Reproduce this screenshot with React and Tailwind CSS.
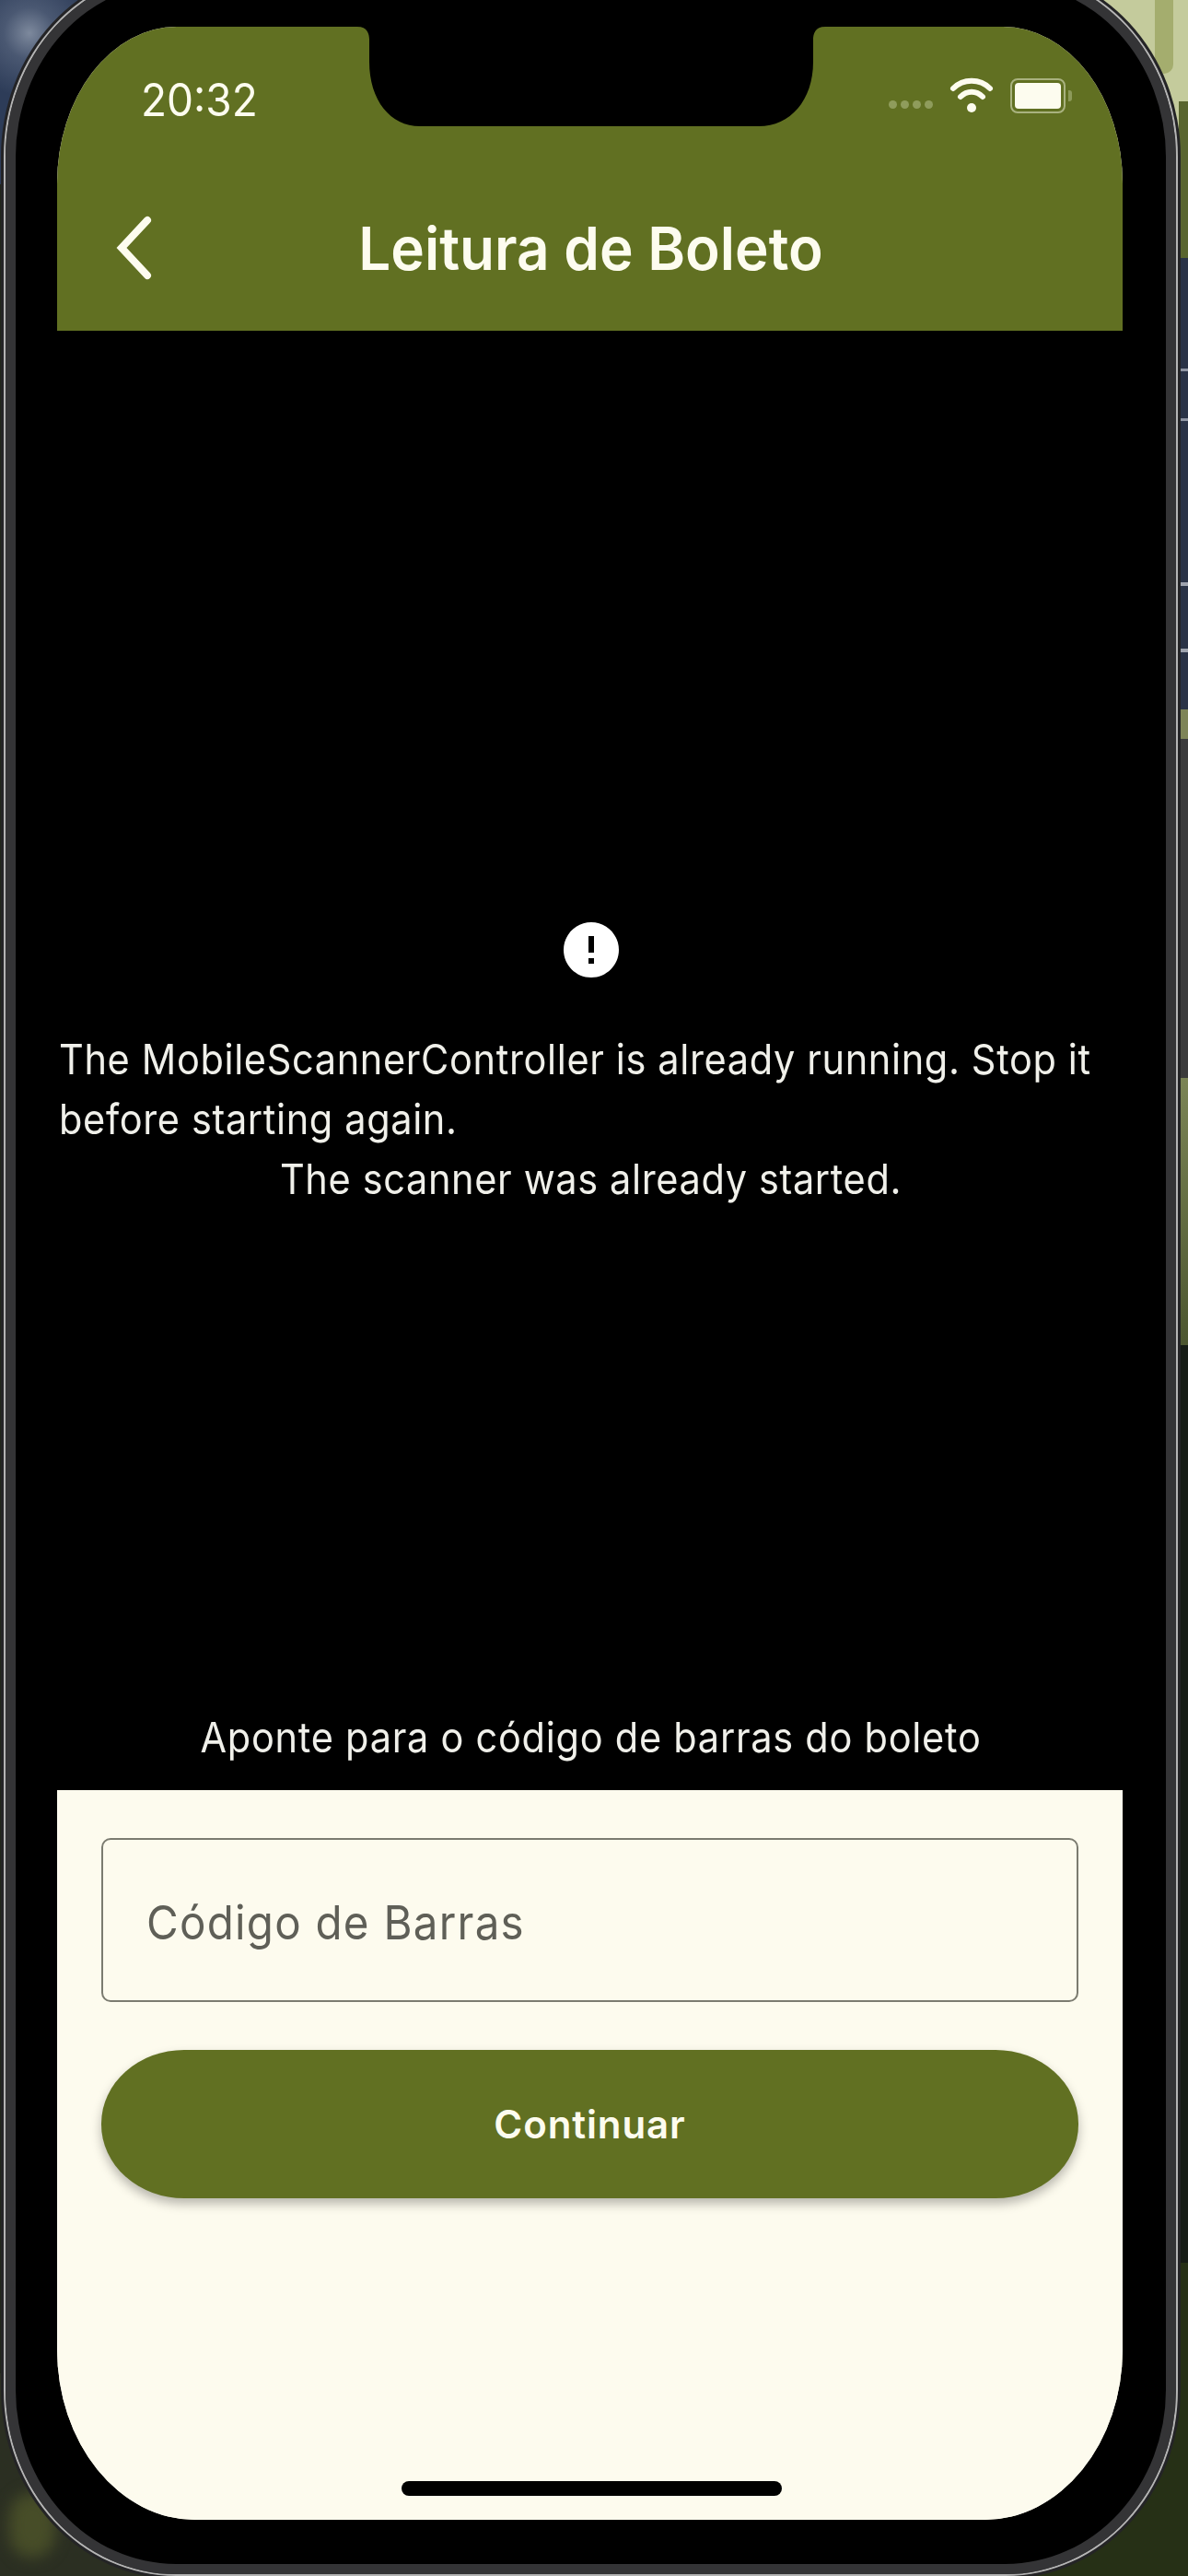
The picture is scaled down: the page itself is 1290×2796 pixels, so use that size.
import React from "react";
import { MdError } from "react-icons/md";

const body = { fontFamily: "Inter, Roboto, sans-serif" };

function Notch() {
  return (
    <svg className="absolute left-[326px] top-0" width="508" height="108" viewBox="0 0 508 108">
      <path d="M0,0 H508 C497,0 495,8 495,14 V38 C495,80 470,108 436,108 H68 C36,108 13,80 13,38 V14 C13,8 11,0 0,0 Z" fill="#000" />
    </svg>
  );
}

function Wifi() {
  return (
    <svg width="50" height="40" viewBox="0 2 50 40" fill="none" stroke="#fdfcef" strokeLinecap="round">
      <path d="M5 15 C16 4 34 4 45 15" strokeWidth="6" />
      <path d="M13 24 C20 17 30 17 37 24" strokeWidth="6" />
      <path d="M25 36 L25 36" strokeWidth="10" />
    </svg>
  );
}

function Battery() {
  return (
    <div className="flex items-center">
      <div className="w-[60px] h-[38px] rounded-[8px] border-[2px] border-[#a9b27f] p-[3px]">
        <div className="w-full h-full rounded-[4px] bg-[#fdfcef]" />
      </div>
      <div className="ml-[3px] w-[4px] h-[12px] rounded-r-[3px] bg-[#8d9a5a]" />
    </div>
  );
}

function Wallpaper() {
  return (
    <>
      <div className="absolute left-0 top-0 w-[140px] h-[200px] bg-[radial-gradient(circle_at_32px_36px,#7d899d_0,#4a5872_28px,#2d3c58_70px)]" />
      <div className="absolute right-0 top-0 w-[110px] h-[160px] bg-[#c4cb9c]" />
      <div className="absolute right-[16px] top-0 w-[20px] h-[80px] rounded-b-[10px] bg-[#a4ad6e]" />
      <div className="absolute right-0 top-[110px] w-[10px] h-[170px] bg-[#59652f]" />
      <div className="absolute right-0 top-[280px] w-[10px] h-[490px] bg-[#2a3347]" />
      <div className="absolute right-0 top-[400px] w-[10px] h-[3px] bg-[#8f95a3]" />
      <div className="absolute right-0 top-[454px] w-[10px] h-[3px] bg-[#8f95a3]" />
      <div className="absolute right-0 top-[632px] w-[10px] h-[4px] bg-[#9ea3ae]" />
      <div className="absolute right-0 top-[704px] w-[10px] h-[4px] bg-[#9ea3ae]" />
      <div className="absolute right-0 top-[770px] w-[10px] h-[32px] bg-[#7e8458]" />
      <div className="absolute right-0 top-[802px] w-[10px] h-[368px] bg-[#3b3b3c]" />
      <div className="absolute right-0 top-[1170px] w-[10px] h-[290px] bg-[linear-gradient(#7b8456,#4c5630)]" />
      <div className="absolute right-0 top-[1460px] w-[10px] h-[1000px] bg-[#161c16]" />
      <div className="absolute left-0 bottom-0 w-[200px] h-[220px] bg-[#2b2f22]" />
      <div className="absolute left-[10px] bottom-[20px] w-[50px] h-[70px] rounded-full bg-[#474d28] blur-[8px]" />
      <div className="absolute right-0 bottom-0 w-[200px] h-[340px] bg-[#263016]" />
    </>
  );
}

function App() {
  return (
    <div className="relative w-[1290px] h-[2796px] overflow-hidden bg-[#20251a]">
      <Wallpaper />

      <div className="relative ml-px -mt-[35px] w-[1281px] h-[2834px] rounded-[190px/205px] border-[3px] border-[#242426] bg-[#333]">
        <div className="w-full h-full rounded-[187px/202px] border-[2px] border-[#b4b4b4]">
          <div className="w-full h-full rounded-[185px/200px] border-[11px] border-[#343436] bg-black pt-[48px] pr-[47px] pb-[48px] pl-[45px]">
            <div className="relative w-full h-full flex flex-col rounded-[130px_130px_150px_150px/170px_170px_185px_185px] overflow-hidden bg-[#fdfbee]" style={body}>
              <header className="relative h-[330px] shrink-0 bg-[#617022] text-[#fdfcef] flex flex-col">
                <Notch />
                <div className="h-[136px] flex items-start pt-[54px] pl-[91px] pr-[55px]">
                  <span className="text-[46px] leading-[50px] scale-y-[1.08]">20:32</span>
                  <div className="ml-auto flex items-end gap-[17px]">
                    <div className="flex gap-[4px] mb-[5px]">
                      <span className="w-[9px] h-[9px] rounded-full bg-[#8f9c5c]" />
                      <span className="w-[9px] h-[9px] rounded-full bg-[#8f9c5c]" />
                      <span className="w-[9px] h-[9px] rounded-full bg-[#8f9c5c]" />
                      <span className="w-[9px] h-[9px] rounded-full bg-[#8f9c5c]" />
                    </div>
                    <Wifi />
                    <Battery />
                  </div>
                </div>
                <div className="relative flex-1 flex items-center justify-center pt-[16px] pl-[2px]">
                  <svg className="absolute left-[64px] top-[68px]" width="42" height="72" viewBox="0 0 42 72" fill="none" stroke="#fdfcef" strokeWidth="8" strokeLinecap="round" strokeLinejoin="miter">
                    <path d="M34 6 L6 36 L34 66" />
                  </svg>
                  <h1 className="text-[62px] leading-[68px] font-semibold scale-y-[1.04]">Leitura de Boleto</h1>
                </div>
              </header>

              <main className="flex-1 bg-black flex flex-col text-[#f0f0ea] text-[41.5px] tracking-[0.64px]">
                <div className="pt-[634px] pl-[2px] flex justify-center">
                  <MdError className="text-white w-[72px] h-[76px]" />
                </div>
                <p className="mt-[53px] pl-[2px] pr-[12px] leading-[60px] scale-y-[1.08]">The MobileScannerController is already running. Stop it before starting again.</p>
                <p className="mt-[6px] pl-[2px] text-center leading-[65px] scale-y-[1.08]">The scanner was already started.</p>
                <p className="mt-auto mb-[24px] pl-[2px] text-center leading-[65px] tracking-[0.74px] scale-y-[1.08]">Aponte para o código de barras do boleto</p>
              </main>

              <section className="h-[792px] shrink-0 bg-[#fdfbee] px-[48px] pt-[52px]">
                <div className="h-[178px] rounded-[10px] border-[2px] border-[#7b7b70] flex items-center pl-[47px] pt-[6px]">
                  <span className="text-[47.5px] tracking-[1.25px] text-[#5f5f57] scale-y-[1.08]">Código de Barras</span>
                </div>
                <button className="mt-[52px] w-full h-[161px] rounded-[90px/80px] bg-[#617022] text-[#fdfcef] text-[42px] font-semibold tracking-[0.9px] shadow-[0_6px_12px_rgba(0,0,0,0.28)]">
                  Continuar
                </button>
              </section>

              <div className="absolute left-[374px] bottom-[26px] w-[413px] h-[16px] rounded-full bg-black" />
            </div>
          </div>
        </div>
      </div>
    </div>
  );
}

export default App;
